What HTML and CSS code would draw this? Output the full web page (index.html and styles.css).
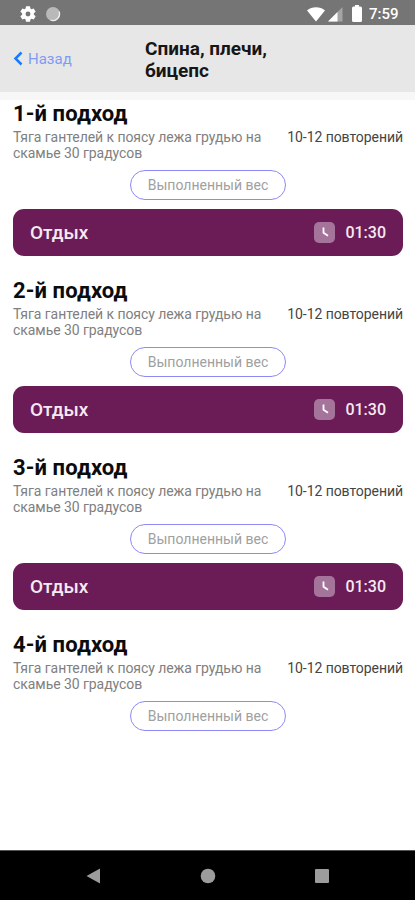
FILE: index.html
```html
<!DOCTYPE html>
<html lang="ru">

<head>
    <meta charset="utf-8">
    <title>Спина, плечи, бицепс</title>
    <link rel="stylesheet" href="styles.css">
</head>

<body>
    <div class="statusbar">
        <svg class="gear" width="16" height="16" viewBox="0 0 24 24">
            <path fill="#fff" fill-rule="evenodd" d="M9 .5h6l.6 3.400 1.700 1 3.200-1.200 3 5-2.700 2.200v2.200l2.700 2.200-3 5-3.200-1.200-1.700 1-.6 3.400H9l-.6-3.400-1.700-1-3.200 1.200-3-5 2.700-2.200v-2.200L.5 8.700l3-5 3.200 1.200 1.700-1zM12 8.300a3.700 3.700 0 1 0 0 7.400 3.700 3.700 0 0 0 0-7.400z" />
        </svg>
        <svg class="sync" width="16" height="16" viewBox="0 0 16 16">
            <circle cx="8" cy="8" r="7" fill="#b9b9b9" />
            <path d="M14 5.500A6.500 6.500 0 0 1 5.500 14" fill="none" stroke="#f2f2f2" stroke-width="1.300" />
        </svg>
        <svg class="wifi" width="20" height="16" viewBox="0 0 20 16">
            <path fill="#fff" d="M1 4.500C6 .2 14 .2 19 4.500L10 15.500z" />
        </svg>
        <svg class="signal" width="15" height="16" viewBox="0 0 15 16">
            <path fill="#a5a5a5" d="M14.500 1v14.500H0z" />
            <path fill="#fff" d="M9.500 6v9.500H0z" />
        </svg>
        <svg class="battery" width="10" height="17" viewBox="0 0 10 17">
            <path fill="#fff" d="M3 0h4v1.500h1.500Q10 1.500 10 3v12.500Q10 17 8.500 17h-7Q0 17 0 15.500V3Q0 1.500 1.500 1.500H3z" />
        </svg>
        <span class="clock">7:59</span>
    </div>

    <div class="header">
        <a class="back">
            <svg width="10" height="15" viewBox="0 0 10 15">
                <path d="M8.500 1.500 2.500 7.500l6 6" fill="none" stroke="#167bff" stroke-width="2.500" />
            </svg>
            <span>Назад</span>
        </a>
        <h1>Спина, плечи,<br>бицепс</h1>
    </div>

    <div class="content">
        <div class="approach">
            <h2>1-й подход</h2>
            <div class="info">
                <p class="exercise">Тяга гантелей к поясу лежа грудью на<br>скамье 30 градусов</p>
                <p class="repeats">10-12 повторений</p>
            </div>
            <div class="weight">Выполненный вес</div>
            <div class="rest">
                <span class="restName">Отдых</span>
                <svg class="timer" width="21" height="21" viewBox="0 0 21 21">
                    <rect width="21" height="21" rx="5" fill="#a5749b" />
                    <path d="M9.500 5.500v5.200l4.500 3" fill="none" stroke="#fff" stroke-width="1.800" />
                </svg>
                <span class="restTime">01:30</span>
            </div>
        </div>

        <div class="approach">
            <h2>2-й подход</h2>
            <div class="info">
                <p class="exercise">Тяга гантелей к поясу лежа грудью на<br>скамье 30 градусов</p>
                <p class="repeats">10-12 повторений</p>
            </div>
            <div class="weight">Выполненный вес</div>
            <div class="rest">
                <span class="restName">Отдых</span>
                <svg class="timer" width="21" height="21" viewBox="0 0 21 21">
                    <rect width="21" height="21" rx="5" fill="#a5749b" />
                    <path d="M9.500 5.500v5.200l4.500 3" fill="none" stroke="#fff" stroke-width="1.800" />
                </svg>
                <span class="restTime">01:30</span>
            </div>
        </div>

        <div class="approach">
            <h2>3-й подход</h2>
            <div class="info">
                <p class="exercise">Тяга гантелей к поясу лежа грудью на<br>скамье 30 градусов</p>
                <p class="repeats">10-12 повторений</p>
            </div>
            <div class="weight">Выполненный вес</div>
            <div class="rest">
                <span class="restName">Отдых</span>
                <svg class="timer" width="21" height="21" viewBox="0 0 21 21">
                    <rect width="21" height="21" rx="5" fill="#a5749b" />
                    <path d="M9.500 5.500v5.200l4.500 3" fill="none" stroke="#fff" stroke-width="1.800" />
                </svg>
                <span class="restTime">01:30</span>
            </div>
        </div>

        <div class="approach">
            <h2>4-й подход</h2>
            <div class="info">
                <p class="exercise">Тяга гантелей к поясу лежа грудью на<br>скамье 30 градусов</p>
                <p class="repeats">10-12 повторений</p>
            </div>
            <div class="weight">Выполненный вес</div>
        </div>
    </div>

    <div class="navbar">
        <svg width="16" height="16" viewBox="0 0 16 16">
            <path fill="#9c9c9c" d="M15 .5v15L1.500 8z" />
        </svg>
        <svg width="16" height="16" viewBox="0 0 16 16">
            <circle cx="8" cy="8" r="7.300" fill="#9c9c9c" />
        </svg>
        <svg width="16" height="16" viewBox="0 0 16 16">
            <rect x="1" y="1" width="14" height="14" rx="1" fill="#9c9c9c" />
        </svg>
    </div>
</body>

</html>
```

FILE: styles.css
```css
* {
    box-sizing: border-box;
}

body {
    margin: 0;
    height: 900px;
    display: flex;
    flex-direction: column;
    background: white;
    font-family: Roboto, "Noto Sans", sans-serif;
    overflow: hidden;
}

h1,
h2,
p {
    margin: 0;
}

svg {
    display: block;
    flex: none;
}

/* android status bar */
.statusbar {
    height: 25px;
    padding: 2px 16px 0 20px;
    display: flex;
    align-items: center;
    background: #757575;
}

.sync {
    margin-left: 9px;
}

.wifi {
    margin-left: auto;
}

.signal {
    margin-left: 2px;
}

.battery {
    margin-left: 9px;
}

.clock {
    width: 30px;
    margin-left: 7px;
    color: white;
    font-size: 15px;
    font-weight: 500;
    white-space: nowrap;
}

.header {
    height: 75px;
    padding-left: 13px;
    display: flex;
    background: #e7e7e7;
    border-bottom: 8px solid #f7f7f7;
}

.back {
    width: 132px;
    display: flex;
    align-items: center;
    gap: 5px;
    color: #7f9cf3;
    font-size: 15px;
}

h1 {
    padding-top: 13px;
    font-size: 19px;
    line-height: 22px;
    font-weight: 700;
    color: #161616;
}

.content {
    flex: 1;
    padding: 0 12px 0 13px;
}

.approach {
    height: 177px;
}

h2 {
    height: 29px;
    font-size: 22px;
    line-height: 27px;
    font-weight: 700;
    letter-spacing: 0.1px;
    color: #0c0c0c;
}

.info {
    height: 32px;
    display: flex;
    justify-content: space-between;
    line-height: 16px;
    font-size: 14px;
    letter-spacing: -0.06px;
    white-space: nowrap;
}

.exercise {
    color: #808080;
}

.repeats {
    color: #444;
}

.weight {
    width: 156px;
    height: 30px;
    margin: 9px auto;
    border: 1px solid #8d89f5;
    border-radius: 15px;
    text-align: center;
    line-height: 28px;
    font-size: 14px;
    color: #a0a0a0;
}

.rest {
    height: 47px;
    padding: 0 17px;
    display: flex;
    align-items: center;
    border-radius: 11px;
    background: #6b1c57;
    color: #f5e9f2;
}

.restName {
    font-size: 19px;
    font-weight: 500;
}

.timer {
    margin-left: auto;
}

.restTime {
    margin-left: 10px;
    font-size: 16px;
    font-weight: 500;
}

/* android navigation buttons */
.navbar {
    height: 50px;
    padding: 0 85px;
    display: flex;
    align-items: center;
    justify-content: space-between;
    background: black;
    border-top: 1px solid #555;
}
```
